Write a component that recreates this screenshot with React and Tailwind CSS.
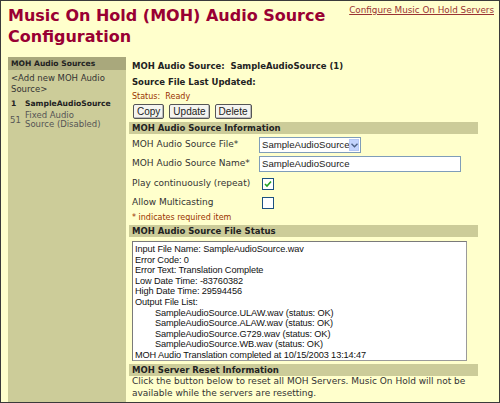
import React from 'react'

const verdana = { fontFamily: '"DejaVu Sans", Verdana, sans-serif' }
const arial = { fontFamily: '"Liberation Sans", Arial, sans-serif' }

const SectionBar = ({ children }) => (
  <div className='bg-[#cccc99] h-[12px] flex items-center pl-[3px] text-[8.5px] font-bold text-[#222] leading-none'>
    {children}
  </div>
)

const Checkbox = ({ checked }) => (
  <div className='w-[12px] h-[12px] border border-[#1c5180] bg-white flex items-center justify-center'>
    {checked && (
      <svg width='8' height='8' viewBox='0 0 8 8'>
        <path d='M1 4 L3 6 L7 1.5' stroke='#21a121' strokeWidth='1.6' fill='none' />
      </svg>
    )}
  </div>
)

const outputLines = [
  ['Input File Name: SampleAudioSource.wav', false],
  ['Error Code: 0', false],
  ['Error Text: Translation Complete', false],
  ['Low Date Time: -83760382', false],
  ['High Date Time: 29594456', false],
  ['Output File List:', false],
  ['SampleAudioSource.ULAW.wav (status: OK)', true],
  ['SampleAudioSource.ALAW.wav (status: OK)', true],
  ['SampleAudioSource.G729.wav (status: OK)', true],
  ['SampleAudioSource.WB.wav (status: OK)', true],
  ['MOH Audio Translation completed at 10/15/2003 13:14:47', false],
]

export default function App() {
  return (
    <div className='w-[500px] h-[403px] bg-[#ffffcc] border border-[#3a3a3a] overflow-hidden flex flex-col' style={verdana}>
      {/* Header */}
      <div className='flex justify-between h-[56px]'>
        <h1 className='pl-[7px] pt-[4px] text-[16px] leading-[21px] font-bold text-[#990033] whitespace-nowrap'>
          Music On Hold (MOH) Audio Source<br />Configuration
        </h1>
        <a className='pr-[5px] pt-[5px] text-[8.8px] leading-none text-[#993333] underline whitespace-nowrap'>
          Configure Music On Hold Servers
        </a>
      </div>

      <div className='flex flex-1'>
        {/* Sidebar */}
        <div className='w-[118px] ml-[7px] bg-[#cccc99] text-[8.5px] text-[#333]'>
          <div className='bg-[#a9a87c] h-[13px] flex items-center pl-[3px] text-[7.6px] font-bold text-[#222] leading-none'>
            MOH Audio Sources
          </div>
          <div className='pl-[3px] pt-[3px] leading-[11px]'>&lt;Add new MOH Audio Source&gt;</div>
          <div className='flex pl-[3px] pt-[3px] text-[7.6px] font-bold text-[#222] leading-[11px]'>
            <span className='w-[14px]'>1</span>
            <span>SampleAudioSource</span>
          </div>
          <div className='flex items-center pl-[2px] pt-[2px] leading-[9px] text-[8.5px] text-[#555]'>
            <span className='w-[15px]'>51</span>
            <span>Fixed Audio<br />Source (Disabled)</span>
          </div>
        </div>

        {/* Main */}
        <div className='w-[349px] ml-[3px] text-[#333]'>
          <div className='pl-[3px] text-[8.5px] font-bold text-[#222] leading-[16px] pt-[1px]'>
            MOH Audio Source:&nbsp; SampleAudioSource (1)
          </div>
          <div className='pl-[3px] text-[8.5px] font-bold text-[#222] leading-[16px]'>Source File Last Updated:</div>
          <div className='pl-[3px] text-[8px] text-[#993300] leading-[13px]'>Status:&nbsp; Ready</div>
          <div className='flex gap-[5px] pl-[4px] pt-[1px] pb-[3px]' style={arial}>
            {['Copy', 'Update', 'Delete'].map((b) => (
              <button key={b} className='h-[15px] px-[3px] text-[10px] leading-none text-[#222] bg-[#f4f4f0] border border-[#555] rounded-[2px] shadow-[inset_-1px_-1px_0_#bbb]'>
                {b}
              </button>
            ))}
          </div>
          <SectionBar>MOH Audio Source Information</SectionBar>

          <div className='pl-[3px] pt-[3px] text-[9px]'>
            <div className='grid grid-cols-[127px_1fr] gap-y-[3px] items-center'>
              <span>MOH Audio Source File*</span>
              <div className='w-[102px] h-[16px] bg-white border border-[#7f9db9] flex items-center justify-between pl-[2px] pr-[1px]'>
                <span className='text-[9.6px] text-[#222]' style={arial}>SampleAudioSource</span>
                <span className='w-[12px] h-[12px] bg-[#c3d3fd] border border-[#b5c8f5] flex items-center justify-center'>
                  <svg width='7' height='5' viewBox='0 0 7 5'>
                    <path d='M0.5 0.8 L3.5 3.8 L6.5 0.8' stroke='#4d6185' strokeWidth='1.4' fill='none' />
                  </svg>
                </span>
              </div>
              <span>MOH Audio Source Name*</span>
              <div className='w-[202px] h-[16px] bg-white border border-[#7f9db9] flex items-center pl-[2px]'>
                <span className='text-[9.6px] text-[#222]' style={arial}>SampleAudioSource</span>
              </div>
              <span className='h-[17px] flex items-center'>Play continuously (repeat)</span>
              <div className='pl-[3px]'><Checkbox checked /></div>
              <span className='h-[15px] flex items-center'>Allow Multicasting</span>
              <div className='pl-[3px]'><Checkbox /></div>
            </div>
            <div className='text-[8px] text-[#993300] leading-[14px] pt-[1px]'>* indicates required item</div>
          </div>

          <SectionBar>MOH Audio Source File Status</SectionBar>
          <div className='pl-[3px] pt-[4px] pb-[3px]'>
            <div
              className='w-[335px] h-[120px] bg-white border border-[#9a9a9a] border-t-[#7a7a7a] border-l-[#7a7a7a] pl-[2px] pt-[2px] text-[9.2px] leading-[10.6px] text-[#111] tracking-[-0.1px]'
              style={arial}
            >
              {outputLines.map(([t, indent]) => (
                <div key={t} className={indent ? 'pl-[20px] whitespace-nowrap' : 'whitespace-nowrap'}>{t}</div>
              ))}
            </div>
          </div>
          <SectionBar>MOH Server Reset Information</SectionBar>
          <div className='pl-[3px] text-[9px] leading-[11.5px]'>
            Click the button below to reset all MOH Servers. Music On Hold will not be available while the servers are resetting.
          </div>
        </div>
      </div>
    </div>
  )
}
